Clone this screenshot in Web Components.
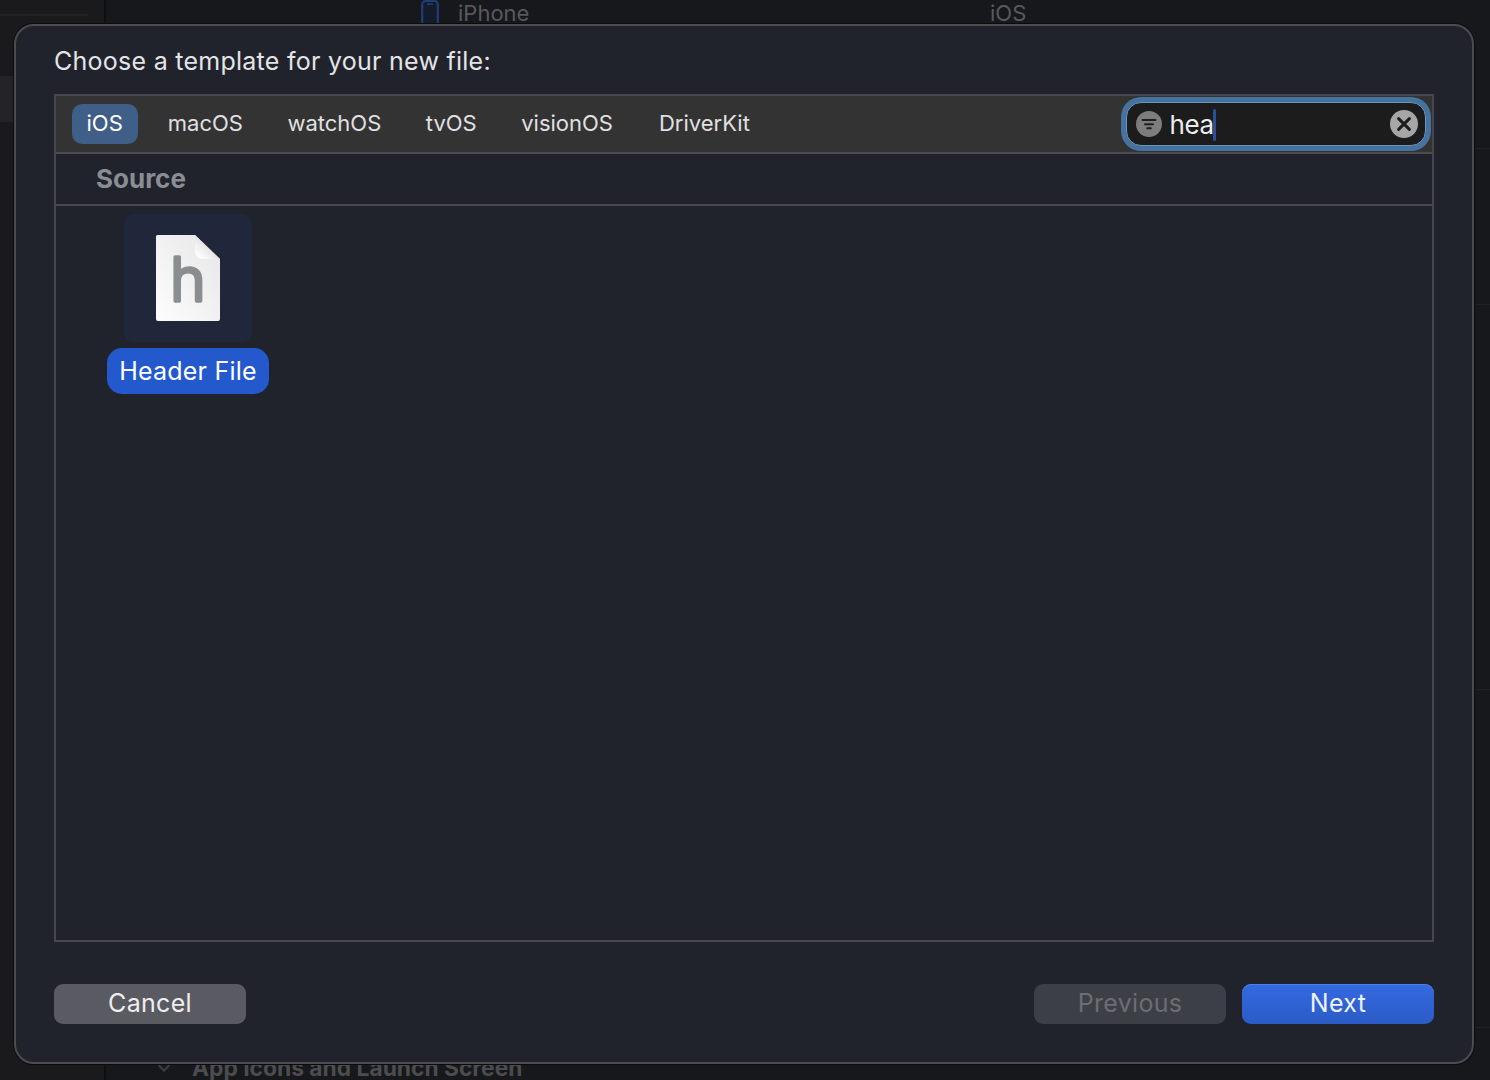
<!DOCTYPE html>
<html lang="en"><head><meta charset="utf-8"><title>Choose a template</title>
<style>
html,body{margin:0;padding:0;height:100%;background:#17181b;overflow:hidden}
body{font-family:Inter,"Noto Sans","Liberation Sans",sans-serif;position:relative;width:1490px;height:1080px}
</style></head><body>
<xcode-backdrop></xcode-backdrop>
<template-sheet heading="Choose a template for your new file:">
  <platform-tabs slot="tabs">
    <tab-item active style="padding-right:15px">iOS</tab-item>
    <tab-item style="margin-left:15.5px">macOS</tab-item>
    <tab-item style="margin-left:15.5px">watchOS</tab-item>
    <tab-item style="margin-left:15.5px">tvOS</tab-item>
    <tab-item style="margin-left:15.5px">visionOS</tab-item>
    <tab-item style="margin-left:17px">DriverKit</tab-item>
    <search-field slot="search" value="hea"></search-field>
  </platform-tabs>
  <section-heading slot="body">Source</section-heading>
  <template-tile slot="body">Header File</template-tile>
  <sheet-button slot="left" kind="normal">Cancel</sheet-button>
  <sheet-button slot="right" kind="disabled">Previous</sheet-button>
  <sheet-button slot="right" kind="primary">Next</sheet-button>
</template-sheet>
<script>
function def(name, html){
  customElements.define(name, class extends HTMLElement{
    connectedCallback(){
      if(this.shadowRoot) return;
      const r=this.attachShadow({mode:'open'});
      r.innerHTML=typeof html==='function'?html(this):html;
    }
  });
}
def('xcode-backdrop',`<style>
:host{display:flex;position:absolute;inset:0;background:#17181b;color:#58595d;overflow:hidden}
.side{width:104px;height:100%;background:#1a1a1c;border-right:2px solid #0f0f10;flex:none;display:flex;flex-direction:column}
.rule{height:2px;margin:14px 16px 0 0;background:#232325}
.sel{height:46px;margin-top:60px;background:#242426}
.main{flex:1;display:flex;flex-direction:column;justify-content:space-between;min-width:0}
.top{display:flex;align-items:flex-start;height:28px;font-size:22px;line-height:27px}
.phone{margin-left:315px;flex:none}
.ip{margin-left:19px;width:532px;flex:none}
.bot{display:flex;align-items:center;height:26px;margin-bottom:-1px;font-weight:700;font-size:22.8px;color:#4c4c4e;line-height:26px}
.chev{margin-left:51px;margin-right:21px;flex:none}
.right{position:absolute;right:0;top:0;bottom:0;width:14px;background:#17181b}
.right i{display:block;height:1px;background:#202124;margin-top:148px}
.right i+i{margin-top:155px}.right i+i+i{margin-top:384px}.right i+i+i+i{margin-top:337px}
</style>
<div class="side"><div class="rule"></div><div class="sel"></div></div>
<div class="main">
 <div class="top"><svg class="phone" width="18" height="30" viewBox="0 0 18 30"><rect x="1.2" y="1" width="15.6" height="29" rx="3.5" fill="#141c2c" stroke="#1f3d70" stroke-width="2.2"/><rect x="6" y="3.4" width="6" height="1.6" fill="#1f3d70"/></svg><span class="ip">iPhone</span><span>iOS</span></div>
 <div class="bot"><svg class="chev" width="14" height="8" viewBox="0 0 14 8"><path d="M1.5 1 7 6.5 12.5 1" fill="none" stroke="#3e3e40" stroke-width="2"/></svg><span>App Icons and Launch Screen</span></div>
</div>
<div class="right"><i></i><i></i><i></i><i></i></div>`);

def('template-sheet',h=>`<style>
:host{position:absolute;left:14px;top:24px;width:1460px;height:1040px;box-sizing:border-box;display:flex;flex-direction:column;background:#20232b;border:2px solid #4b4c52;border-radius:20px;padding:0 38px;color:#e6e6e8;box-shadow:0 0 0 1px #0b0b0c}
h1{margin:0;height:68px;box-sizing:border-box;padding-top:18px;font-size:25px;line-height:34px;font-weight:400;letter-spacing:.26px;color:#e4e4e6;flex:none}
.panel{height:848px;flex:none;box-sizing:border-box;border:2px solid #47484c;display:flex;flex-direction:column}
.body{flex:1;display:flex;flex-direction:column;min-height:0}
footer{display:flex;justify-content:space-between;margin-top:42px}
.r{display:flex;gap:16px}
</style>
<h1>${h.getAttribute('heading')}</h1>
<div class="panel"><slot name="tabs"></slot><div class="body"><slot name="body"></slot></div></div>
<footer><div class="r"><slot name="left"></slot></div><div class="r"><slot name="right"></slot></div></footer>`);

def('platform-tabs',`<style>
:host{display:flex;align-items:center;height:58px;box-sizing:border-box;background:#333333;border-bottom:2px solid #4a4b4e;padding:0 6px 0 16px;position:relative}
.s{margin-left:auto}
</style><slot></slot><div class="s"><slot name="search"></slot></div>`);

def('tab-item',h=>`<style>
:host{display:block;height:40px;box-sizing:border-box;padding:0 14.5px;border-radius:10px;font-size:22px;line-height:38px;color:#e0e0e2;${h.hasAttribute('active')?'background:#3f5f88;color:#fff;':''}}
</style><slot></slot>`);

def('search-field',h=>`<style>
:host{display:flex;align-items:center;width:300px;height:44px;box-sizing:border-box;background:#1c1c1c;border:1.5px solid #6d96bd;border-radius:15px;box-shadow:0 0 0 5px #45729f;padding:0 7.5px 0 8.5px;color:#ececee;font-size:26px}
.v{margin-left:8px;margin-top:1px;position:relative;line-height:32px;height:32px;letter-spacing:-.4px;flex:1}
.c{display:inline-block;width:3.5px;height:32px;background:#2a4f9f;border-radius:2px;vertical-align:top;margin-left:-1px}
svg{flex:none;display:block}
</style>
<svg width="26" height="26" viewBox="0 0 26 26"><circle cx="13" cy="13" r="13" fill="#7d7d7d"/><path d="M6.5 9h13M9 13.2h8M11.2 17.3h3.6" stroke="#1f1f1f" stroke-width="2" stroke-linecap="round"/></svg>
<div class="v">${h.getAttribute('value')}<span class="c"></span></div>
<svg width="28" height="28" viewBox="0 0 28 28"><circle cx="14" cy="14" r="14" fill="#a6a6a6"/><path d="M8.6 8.6l10.8 10.8M19.4 8.6 8.6 19.4" stroke="#1c1c1c" stroke-width="3" stroke-linecap="round"/></svg>`);

def('section-heading',`<style>
:host{display:block;height:52px;box-sizing:border-box;border-bottom:2px solid #47484c;padding-left:40px;font-size:26px;font-weight:700;line-height:50px;color:#8b8d95;flex:none}
</style><slot></slot>`);

def('template-tile',`<style>
:host{display:flex;flex-direction:column;align-items:center;width:162px;margin:8px 0 0 51px;flex:none}
.ic{width:128px;height:128px;background:#20273b;border-radius:9px;display:flex;align-items:center;justify-content:center}
.lb{margin-top:6px;height:46px;width:162px;box-sizing:border-box;background:#2359cc;border-radius:15px;color:#fff;font-size:25px;letter-spacing:.2px;line-height:46px;text-align:center;white-space:nowrap}
svg{display:block}
text{font-family:Inter,"Liberation Sans",sans-serif}
</style>
<div class="ic"><svg width="68" height="90" viewBox="0 0 68 90">
<defs><linearGradient id="p" x1="0" y1="1" x2="1" y2="0"><stop offset="0" stop-color="#fdfdfd"/><stop offset="1" stop-color="#e6e6e6"/></linearGradient>
<linearGradient id="f" x1="0.1" y1="0.9" x2="0.75" y2="0.25"><stop offset="0" stop-color="#ffffff"/><stop offset=".55" stop-color="#e8e8e8"/><stop offset="1" stop-color="#b4b4b4"/></linearGradient></defs>
<path d="M3.5 2H41L66 26V85a2 2 0 0 1-2 2H4a2 2 0 0 1-2-2V3.5A1.5 1.5 0 0 1 3.5 2Z" fill="#0e1220" opacity=".55" transform="translate(0 1)"/>
<path d="M3.5 2H41L66 26V86a2 2 0 0 1-2 2H4a2 2 0 0 1-2-2V3.5A1.5 1.5 0 0 1 3.5 2Z" fill="url(#p)"/>
<path d="M41 2 66 26H49a8 8 0 0 1-8-8Z" fill="url(#f)"/>
<text x="34" y="67.5" text-anchor="middle" font-size="60" font-weight="300" fill="#8b8e91" stroke="#8b8e91" stroke-width="3.6" stroke-linejoin="round">h</text>
</svg></div>
<div class="lb"><slot></slot></div>`);

def('sheet-button',h=>{
 const k=h.getAttribute('kind');
 const s={normal:'background:#5a5b62;color:#eeeef0;',disabled:'background:#3d3f47;color:#6c6d73;',primary:'background:linear-gradient(#3469e0,#2b5bc6);color:#edf1fc;box-shadow:inset 0 1px 0 #4f80ea;'}[k];
 return `<style>:host{display:block;width:192px;height:40px;border-radius:9px;text-align:center;font-size:25px;letter-spacing:.3px;line-height:39px;${s}}</style><slot></slot>`;
});
</script>
</body></html>
